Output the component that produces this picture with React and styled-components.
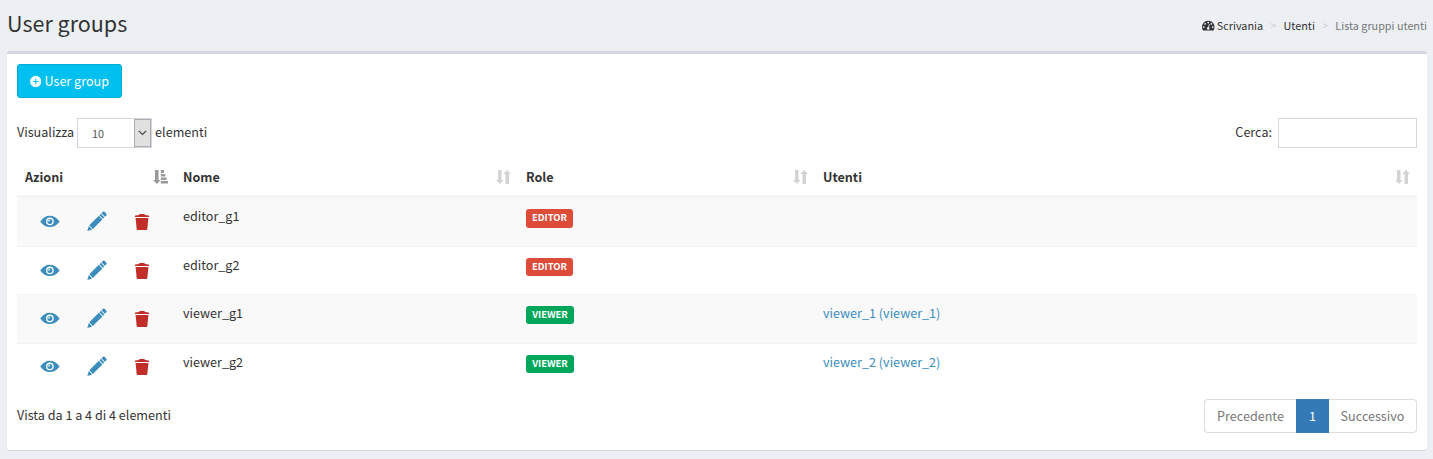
import React from 'react';
import styled, { createGlobalStyle } from 'styled-components';

const Global = createGlobalStyle`
  * { box-sizing: border-box; }
  body {
    margin: 0;
    background: #ecf0f5;
    color: #333;
    font-family: "Source Sans Pro", "Noto Sans CJK SC", sans-serif;
    font-size: 12.6px;
    line-height: 20px;
  }
`;

const Page = styled.div`
  height: 459px;
  padding: 0 6px 0 7px;
  overflow: hidden;
`;

const PageHeader = styled.header`
  display: flex;
  justify-content: space-between;
  height: 51px;
`;

const Title = styled.h1`
  margin: 10px 0 0;
  font-size: 21.5px;
  font-weight: 400;
  line-height: 26px;
`;

const Breadcrumb = styled.nav`
  display: flex;
  align-items: center;
  height: 18px;
  margin-top: 16px;
  font-size: 10.8px;
  line-height: 18px;
  color: #777;
`;

const Crumb = styled.a`
  display: flex;
  align-items: center;
  gap: 2px;
  color: #333;
`;

const Separator = styled.span`
  width: 20.5px;
  text-align: center;
  font-size: 10.8px;
  color: #ccc;
`;

const Box = styled.main`
  height: 399px;
  padding: 10px;
  background: #fff;
  border-top: 3px solid #d2d6de;
  border-radius: 3px;
  box-shadow: 0 1px 1px rgba(0, 0, 0, 0.1);
`;

const AddButton = styled.button`
  display: flex;
  align-items: center;
  gap: 3px;
  width: 105px;
  height: 34px;
  padding: 0 12px;
  border: 1px solid #00acd6;
  border-radius: 3px;
  background: #00c0ef;
  color: #fff;
  font: inherit;
  white-space: nowrap;
`;

const Toolbar = styled.div`
  display: flex;
  justify-content: space-between;
  margin-top: 20px;
`;

const Control = styled.label`
  display: flex;
  height: 30px;
  line-height: 28px;
  gap: ${(p) => p.$gap}px;
`;

const Select = styled.span`
  display: flex;
  justify-content: space-between;
  width: 75px;
  height: 30px;
  padding-left: 14px;
  border: 1px solid #d2d6de;
  color: #555;
  font-size: 10.8px;
  line-height: 29px;
`;

const SelectArrow = styled.span`
  display: flex;
  align-items: center;
  justify-content: center;
  width: 17px;
  height: 28px;
  border: 1px solid #adadad;
  background: #e1e1e1;
`;

const SearchInput = styled.input`
  width: 139px;
  height: 30px;
  border: 1px solid #d2d6de;
  background: #fff;
`;

const Table = styled.div`
  margin-top: 11px;
`;

const Row = styled.div`
  display: grid;
  grid-template-columns: 158px 343px 297px 602px;
  height: ${(p) => p.$height}px;
  border-top: 1px solid #f4f4f4;
  background: ${(p) => (p.$striped ? '#f9f9f9' : '#fff')};
`;

const HeadRow = styled(Row)`
  height: 38px;
  border-top: 0;
  border-bottom: 2px solid #f4f4f4;
  font-weight: 700;
`;

const HeadCell = styled.div`
  display: flex;
  align-items: center;
  justify-content: space-between;
  padding: 0 7px 0 8px;
`;

const Cell = styled.div`
  padding: 8px 8px 0;
`;

const Actions = styled.div`
  display: flex;
  align-items: flex-start;
  padding: ${(p) => p.$top}px 0 0 22px;
`;

const Action = styled.a`
  display: flex;
  justify-content: center;
  width: 22px;
  margin-right: ${(p) => p.$after || 0}px;
  color: ${(p) => (p.$danger ? '#c12e2a' : '#3c8dbc')};
`;

const Badge = styled.span`
  display: block;
  width: ${(p) => (p.$editor ? 47 : 48)}px;
  height: ${(p) => p.$height}px;
  margin-top: 3px;
  border-radius: 3px;
  background: ${(p) => (p.$editor ? '#dd4b39' : '#00a65a')};
  color: #fff;
  font-size: 9.45px;
  font-weight: 700;
  line-height: 17px;
  text-align: center;
`;

const UserLink = styled.a`
  color: #3c8dbc;
`;

const Footer = styled.footer`
  display: flex;
  justify-content: space-between;
  margin-top: 8px;
`;

const Info = styled.div`
  padding-top: 6px;
`;

const Pagination = styled.div`
  display: flex;
  height: 34px;
`;

const PageItem = styled.a`
  width: ${(p) => p.$width}px;
  border: 1px solid ${(p) => (p.$active ? '#337ab7' : '#ddd')};
  border-left-width: ${(p) => (p.$last ? 0 : 1)}px;
  border-right-width: ${(p) => (p.$first ? 0 : 1)}px;
  border-radius: ${(p) => (p.$first ? '4px 0 0 4px' : p.$last ? '0 4px 4px 0' : '0')};
  background: ${(p) => (p.$active ? '#337ab7' : '#fff')};
  color: ${(p) => (p.$active ? '#fff' : '#777')};
  line-height: 32px;
  text-align: center;
`;

const PlusIcon = () => (
  <svg width="13" height="13" viewBox="0 0 13 13">
    <path fill="currentColor" fillRule="evenodd" d="M6.5.1a6.4 6.4 0 1 0 0 12.800A6.4 6.4 0 0 0 6.5.1zM5.900 3.200h1.200v2.700h2.700v1.200H7.100v2.700H5.900V7.100H3.200V5.900h2.700z" />
  </svg>
);

const DashboardIcon = () => (
  <svg width="12.500" height="12.500" viewBox="0 0 1792 1792">
    <path fill="currentColor" d="M384 1152q0-53-37.5-90.5t-90.5-37.5-90.5 37.5-37.5 90.5 37.5 90.5 90.5 37.5 90.5-37.5 37.5-90.5zm192-448q0-53-37.5-90.5t-90.5-37.5-90.5 37.5-37.5 90.5 37.5 90.5 90.5 37.5 90.5-37.5 37.5-90.5zm428 481l101-382q6-26-7.5-48.5t-38.5-29.5-48 6.5-30 39.5l-101 382q-60 5-107 43.5t-63 98.5q-20 77 20 146t117 89 146-20 89-117q16-60-6-117t-72-91zm660-33q0-53-37.5-90.5t-90.5-37.5-90.5 37.5-37.5 90.5 37.5 90.5 90.5 37.5 90.5-37.5 37.5-90.5zm-640-640q0-53-37.5-90.5t-90.5-37.5-90.5 37.5-37.5 90.5 37.5 90.5 90.5 37.5 90.5-37.5 37.5-90.5zm448 192q0-53-37.5-90.5t-90.5-37.5-90.5 37.5-37.5 90.5 37.5 90.5 90.5 37.5 90.5-37.5 37.5-90.5zm320 448q0 261-141 483-19 29-54 29h-1402q-35 0-54-29-141-221-141-483 0-182 71-348t191-286 286-191 348-71 348 71 286 191 191 286 71 348z" />
  </svg>
);

const EyeIcon = () => (
  <svg width="20" height="20" viewBox="0 0 20 20">
    <path fill="currentColor" d="M.2 10.400C3 6.500 6.200 4.700 9.900 4.700s6.900 1.800 9.700 5.700c-2.800 3.900-6 5.700-9.700 5.700S3 14.300.2 10.400z" />
    <circle cx="9.900" cy="10.400" r="3.800" fill="#fff" />
    <circle cx="9.900" cy="10.400" r="2.500" fill="currentColor" />
    <path fill="#fff" d="M9.900 8.400v1.300l-1.300 1.200a1.600 1.600 0 0 1 1.300-2.500z" />
  </svg>
);

const PencilIcon = () => (
  <svg width="20" height="20" viewBox="0 0 20 20">
    <path fill="currentColor" d="M14.500 2.200 15.800 1c.7-.6 1.500-.5 2.100.1l1.300 1.300c.6.6.6 1.400 0 2.100L18 5.800zM13.900 2.800l3.500 3.600-1.400 1.400-3.600-3.600zM11.800 4.800l3.600 3.600-9.500 9.500-3.600-3.600zM1.800 14.900l3.500 3.500L.3 20z" />
  </svg>
);

const TrashIcon = () => (
  <svg width="16" height="20" viewBox="0 0 16 20">
    <path fill="currentColor" d="M.9 6V5.200q0-.5.600-.6L5 4l.6-1h4.800l.6 1 3.500.6q.6.100.6.600V6zM1.600 7h12.800L13.300 18.200q-.1.800-.9.800H3.600q-.8 0-.9-.8z" />
  </svg>
);

const SortIcon = () => (
  <svg width="15" height="14" viewBox="0 0 15 14">
    <path fill="#d3d3d3" d="M2 0h3.500v10H7.500l-3.500 4-4-4H2zM9.500 14V4H7.200l3.800-4 4 4h-2v10z" />
  </svg>
);

const SortActiveIcon = () => (
  <svg width="15" height="14" viewBox="0 0 15 14">
    <path fill="#999" d="M2 0h3.500v10H7.500l-3.500 4-4-4h2zM7.800 0H11v3H7.800zM7.800 4h4.500v2.500H7.800zM7.800 7.500h5.700V10H7.800zM7.800 11H15v2.500H7.800z" />
  </svg>
);

const ChevronIcon = () => (
  <svg width="9" height="6" viewBox="0 0 9 6">
    <path d="M.8.8 4.500 4.500 8.200.8" fill="none" stroke="#444" strokeWidth="1.200" />
  </svg>
);

const groups = [
  { name: 'editor_g1', role: 'EDITOR', height: 49, iconTop: 13, badge: 19 },
  { name: 'editor_g2', role: 'EDITOR', height: 48, iconTop: 13, badge: 18 },
  { name: 'viewer_g1', role: 'VIEWER', user: 'viewer_1 (viewer_1)', height: 49, iconTop: 13, badge: 18 },
  { name: 'viewer_g2', role: 'VIEWER', user: 'viewer_2 (viewer_2)', height: 48, iconTop: 12, badge: 18 },
];

export default function App() {
  return (
    <Page>
      <Global />
      <PageHeader>
        <Title>User groups</Title>
        <Breadcrumb>
          <Crumb><DashboardIcon />Scrivania</Crumb>
          <Separator>&gt;</Separator>
          <Crumb>Utenti</Crumb>
          <Separator>&gt;</Separator>
          <span>Lista gruppi utenti</span>
        </Breadcrumb>
      </PageHeader>
      <Box>
        <AddButton><PlusIcon />User group</AddButton>
        <Toolbar>
          <Control $gap={3}>
            Visualizza
            <Select>10<SelectArrow><ChevronIcon /></SelectArrow></Select>
            elementi
          </Control>
          <Control $gap={6}>Cerca:<SearchInput /></Control>
        </Toolbar>
        <Table>
          <HeadRow>
            <HeadCell>Azioni<SortActiveIcon /></HeadCell>
            <HeadCell>Nome<SortIcon /></HeadCell>
            <HeadCell>Role<SortIcon /></HeadCell>
            <HeadCell>Utenti<SortIcon /></HeadCell>
          </HeadRow>
          {groups.map((g, i) => (
            <Row key={g.name} $striped={i % 2 === 0} $height={g.height}>
              <Actions $top={g.iconTop}>
                <Action $after={25}><EyeIcon /></Action>
                <Action $after={22.5}><PencilIcon /></Action>
                <Action $danger><TrashIcon /></Action>
              </Actions>
              <Cell>{g.name}</Cell>
              <Cell><Badge $editor={g.role === 'EDITOR'} $height={g.badge}>{g.role}</Badge></Cell>
              <Cell><UserLink>{g.user}</UserLink></Cell>
            </Row>
          ))}
        </Table>
        <Footer>
          <Info>Vista da 1 a 4 di 4 elementi</Info>
          <Pagination>
            <PageItem $first $width={92}>Precedente</PageItem>
            <PageItem $active $width={33}>1</PageItem>
            <PageItem $last $width={88}>Successivo</PageItem>
          </Pagination>
        </Footer>
      </Box>
    </Page>
  );
}
